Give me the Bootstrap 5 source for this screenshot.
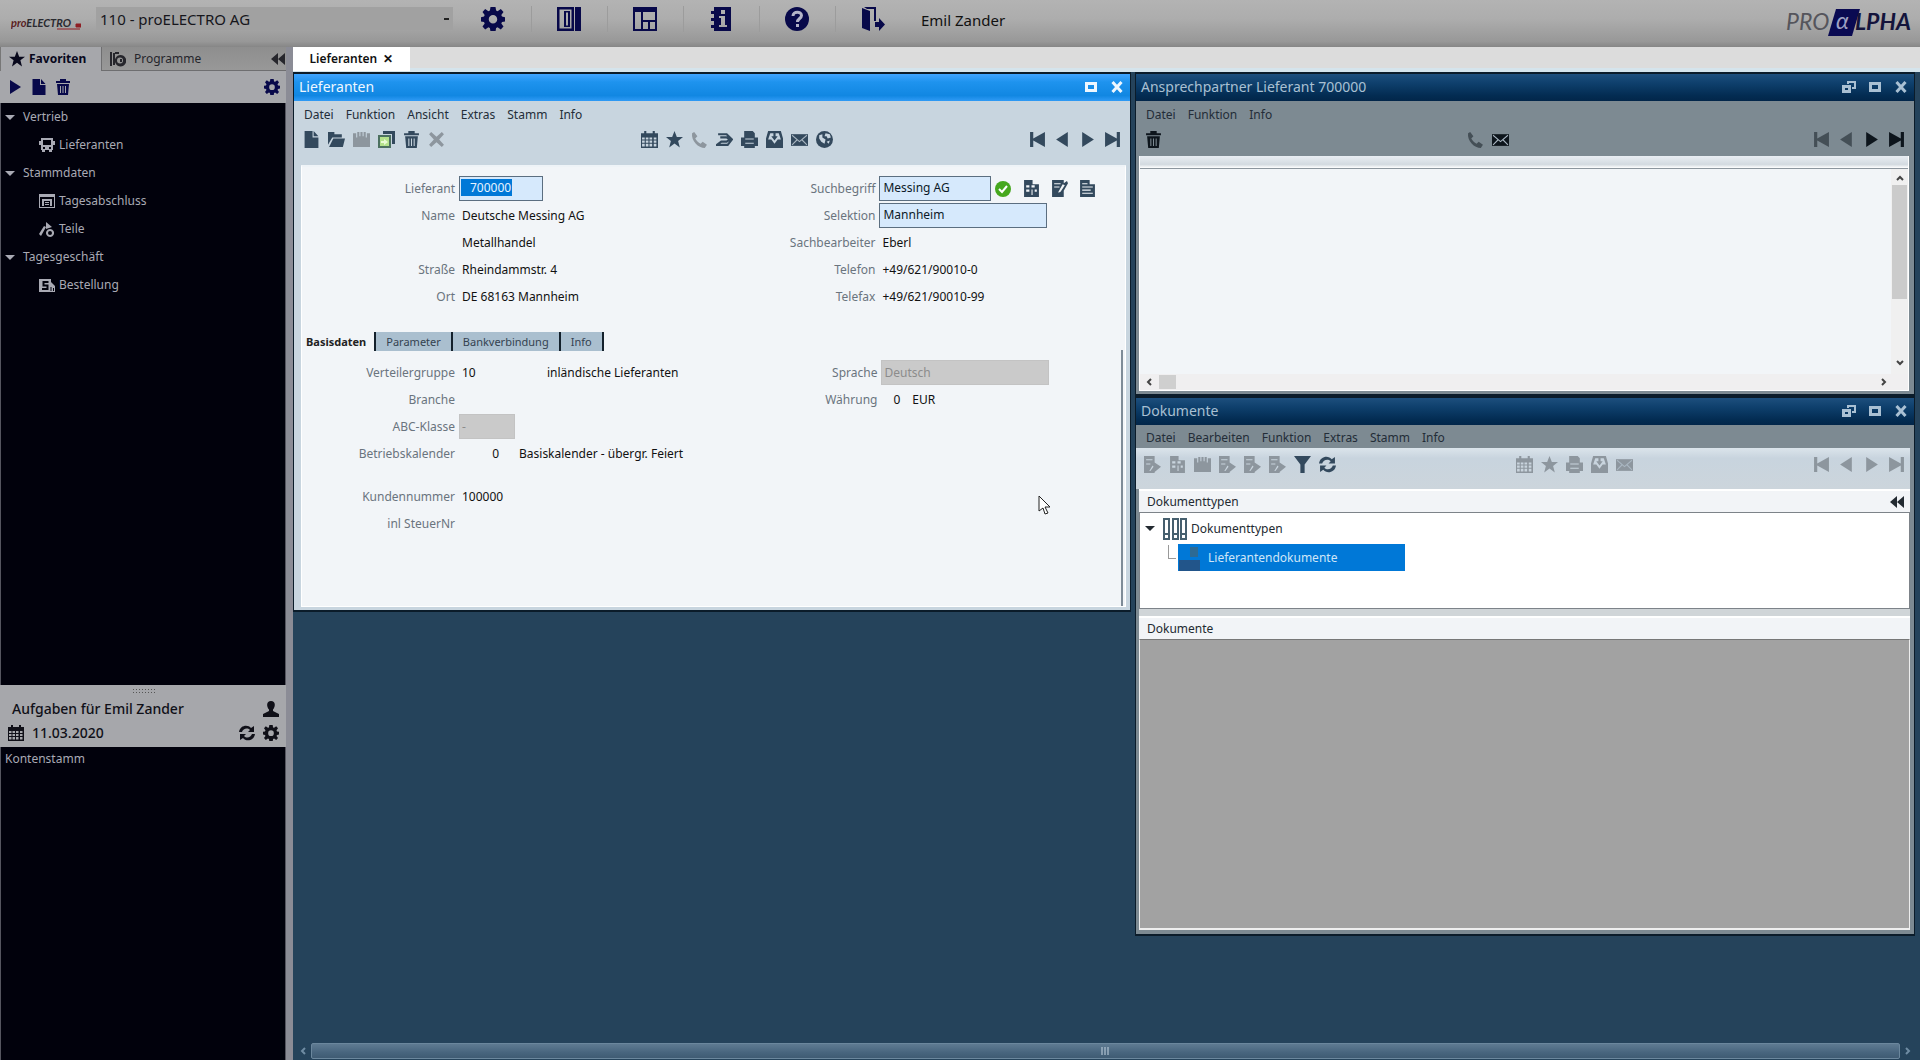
<!DOCTYPE html>
<html lang="de">
<head>
<meta charset="utf-8">
<meta name="viewport" content="width=device-width, initial-scale=1">
<title>Lieferanten</title>
<link href="https://cdn.jsdelivr.net/npm/bootstrap@5.3.0/dist/css/bootstrap.min.css" rel="stylesheet">
<style>
:root{--navy:#08094a;--ink:#33495d;--off:#8d969e;--desk:#25435b}
body{font-family:"Noto Sans","Open Sans",sans-serif;font-size:12px;line-height:16px;color:#111;background:var(--desk)}
button{border:0;background:none;padding:0;color:inherit;line-height:inherit}
a{color:inherit;text-decoration:none}
.ic{width:16px;height:16px;fill:currentColor;display:block;flex:none}
.ic-lg{width:24px;height:24px}
.topbar{height:47px;background:linear-gradient(#b3b3b3,#adadad 40%,#989898 88%,#868686);color:var(--navy);padding:0 8px 0 11px}
.topbar .logo-e{width:70px;height:14px;margin-right:15px}
.client{width:357px;height:23px;margin-bottom:10px;background-color:#a1a1a1;border:0;border-radius:0;padding:0 24px 0 4px;font-size:15px;line-height:22px;color:#16161c;appearance:none;background-repeat:no-repeat;background-image:linear-gradient(#222,#222);background-size:5px 2px;background-position:right 4px center}
.toolstrip{margin:0 0 9px 3px}
.toolstrip button{padding:0 26px 0 25px;height:26px;border-right:1px solid #9c9c9c}
.toolstrip button:last-child{border:0}
.username{font-size:15px;color:#111;margin:0 0 8px 10px}
.side{width:293px;flex:none;background:#a6a7ab;border-right:7px solid #8b8c96;color:var(--navy)}
.side-tabs{height:24px}
.side-tabs .on{width:101px;font-weight:700;background:#a6a7ab;color:#08081c;border-left:1px solid #777}
.side-tabs .other{flex:1;background:linear-gradient(#8e8e8e,#989898);border:1px solid #6e6e70;border-top:0;border-right:0;color:#26262c;padding:0 0 0 8px}
.side-tools{height:32px;padding:0 6px 0 7px}
.darklist{background:#01010c;color:#a9aab4;border-left:1px solid #55555f;border-right:1px solid #55555f}
.tree-nav{height:582px;padding-top:0}
.tree-nav .line{height:28px;padding-left:4px}
.tree-nav .sub{padding-left:38px}
.tri{width:0;height:0;border:5px solid transparent;border-top:5px solid currentColor;border-bottom:0}
.tasks{height:62px;padding:3px 7px 2px 8px;font-size:14px;font-weight:500;color:#101018}
.grip{width:24px;height:5px;margin:0 auto;background:radial-gradient(#555 1px,transparent 1px) 0 0/3px 3px}
.desk-tabs{height:25px;background:#dcdcdc;border-bottom:4px solid #d5e4ec}
.desk-tabs button{width:117px;height:24px;background:#fff;font-weight:600;color:#111}
.mdi{display:grid;grid-template-columns:minmax(0,838fr) minmax(0,780fr);gap:4px;padding-right:5px;align-items:start}
.win{border:1px solid #0b1c2a;border-width:2px 1px;background:#c8d5df;color:#232d38}
.win-dim{background:#7d8a92}
.titlebar{height:27px;padding:0 5px 2px 5px;font-size:14px;color:#eef7ff;background:linear-gradient(#3fa4ff,#1e93ee 30%,#1187e2 80%,#2f9af5)}
.win-dim .titlebar{color:#a9c0d3;background:linear-gradient(#1d4f7d,#0e3f6c 35%,#032c52 80%,#02264a)}
.winbtns{gap:10px}
.winbtns .ic{width:16px;height:14px}
.menubar{height:24px;gap:12px;padding:4px 0 0 10px}
.iconrow{padding:6px 9px 0;color:var(--ink)}
.iconrow .ic{width:17px;height:17px}
.iconrow>div{gap:8px}
.iconrow>.lead-icons{flex:1}
.main-tools{height:40px}
.main-tools .mid-icons{margin-left:50px}
.contact-tools{height:27px;color:#0d151c}
.contact-tools .mid-icons{margin-right:74px}
.doc-tools .mid-icons{margin-left:100px}
.iconrow .is-live{color:var(--ink)}
.iconrow .ic.is-off,.is-off{color:var(--off)}
.field-icons{padding:0 0 0 12px}
.field-icons .ic{margin-right:11px}
.pane{background:#f2f5f8;color:#111;border:1px solid #fff;border-top:2px solid #eef3f7}
.main-pane{margin:0 4px 3px 7px;padding:8px 0 0}
.halves{display:grid;grid-template-columns:422fr 404fr}
.frow{display:flex;align-items:center;min-height:27px}
.frow>label,.frow>.cap{width:153px;text-align:right;color:#6a747e;flex:none}
.val{padding-left:7px}
.frow input{height:25px;border:1px solid #5b6e80;background:#d6e9fc;margin-left:4px;padding:0 3px 2px;color:#0c1a28}
.frow select{height:25px;border:1px solid #c3c3c3;background:#cacaca;color:#8c8c8c;margin-left:4px;padding:0 2px;appearance:none;opacity:1}
.w-s{width:84px}.w-m{width:112px}.w-l{width:168px}.w-xs{width:56px}
.num-cell{width:44px}
.numfield{position:relative}
.seltext{position:absolute;left:6px;top:3px;background:#0078d7;color:#e8f4ff;padding:0 1px 0 9px;line-height:17px;pointer-events:none}
.formtabs{margin:22px 0 9px 0;height:19px;font-size:11px}
.formtabs button{border-right:2px solid #14212c;background:#aabfcf;color:#34424f;padding:0 10px;line-height:18px;height:19px}
.formtabs .on{background:none;color:#222;font-weight:700;padding:0 8px 0 4px}
.basis{grid-template-columns:424fr 398fr;border-right:2px solid #7e8b97;margin:-10px 2px 0 0;padding-top:9px;height:256px}
.contact-pane{margin:4px 5px 3px 3px;border-top:0}
.contact-head{height:13px;background:linear-gradient(#e9eef3,#d3dae0 70%,#fff);border-bottom:1px solid #8d969e}
.contact-list{height:205px}
.vbar{width:17px;background:#f0f0f0;color:#444;padding:5px 0 7px}
.vbar i{width:15px;height:114px;background:#cbcbcb;margin:3px 0 0 0}
.hbar{height:16px;background:#f0eff0;color:#444;padding:0 20px 1px 5px}
.hbar i{width:17px;height:14px;background:#cfcfcf;margin-left:6px}
.sb{width:8px;height:8px;fill:none;stroke:currentColor;stroke-width:2}
.doc-menu{height:23px;padding-top:3px}
.doc-tools{height:41px;background:linear-gradient(#dbe4eb,#c8d4de 25%,#ccd5dc);padding:0 5px 9px 8px;margin:0 4px 0 0}
.dochead{height:23px;background:#f2f4f7;border-top:2px solid #fff;padding:0 5px 0 8px;color:#232a31}
.docbody{margin:0 4px 4px 3px}
.doctree{height:97px;border:1px solid #7d8389;background:#fff;color:#232a31}
.doctree .l1{height:31px;padding-left:5px}
.branch{width:8px;height:14px;border:solid #999;border-width:0 0 1px 1px;margin:0 2px 12px 28px}
.picked{width:227px;height:27px;background:#0078d7;color:#cfe6f8}
.docgap{height:7px;background:#d0d5d8}
.docarea{height:291px;background:#a2a2a2;border:1px solid #eee;border-width:0 1px 2px;border-top:1px solid #777}
.deskbar{height:17px;gap:4px;padding:0 8px 1px 6px;color:#6f8ca3}
.deskbar>.thumb{flex:1;height:16px;background:linear-gradient(#5f7b92,#48657e 60%,#3f5b73);border:1px solid #6b879d;border-radius:2px;color:#c5d5e2}
.pointer{position:absolute;left:1038px;top:495px;width:14px;height:21px}
</style>
</head>
<body class="d-flex flex-column min-vh-100">
<svg width="0" height="0" class="position-absolute" aria-hidden="true">
<symbol id="gear" viewBox="0 0 24 24"><path fill-rule="evenodd" d="M9.500 0h5l.6 3.600 1.500.7L19.800 2 22.500 5l-2.200 3 .7 1.600 3 .6v4.200l-3 .6-.7 1.600 2.200 3-2.700 3-3.200-2.300-1.500.7-.6 3.600h-5l-.6-3.600-1.500-.7L4.200 22.600l-2.700-3 2.200-3-.7-1.600-3-.6v-4.200l3-.6.7-1.600-2.200-3 2.700-3 3.200 2.300 1.500-.7zM12 8a4.200 4.200 0 1 0 0 8.500A4.200 4.200 0 0 0 12 8z"/></symbol>
<symbol id="panel" viewBox="0 0 24 24"><path fill-rule="evenodd" d="M0 0h17v24H0zM2.500 2.500v19h12v-19zM7 4h6v16H7zM9 5.500v13h2v-13zM18 0h6v24h-6z"/></symbol>
<symbol id="layout" viewBox="0 0 24 24"><path fill-rule="evenodd" d="M0 0h24v24H0zM2 5v17h6V5zM10 5v8h12V5zM10 15v7h5v-7zM17 15v7h5v-7z"/></symbol>
<symbol id="infobook" viewBox="0 0 24 24"><path fill-rule="evenodd" d="M5 0h17v24H5v-3H2v-3h3v-4H2v-3h3V7H2V4h3zM12 3v4h4V3zM10 9v2h2v7h-2v2h8v-2h-2V9z"/></symbol>
<symbol id="help" viewBox="0 0 24 24"><circle cx="12" cy="12" r="12"/><path d="M8 9c0-5 8.500-5 8.500-.5 0 3-4 3-4 6.500M12.500 17v3" fill="none" stroke="#b4b4c8" stroke-width="3"/></symbol>
<symbol id="exit" viewBox="0 0 24 24"><path fill-rule="evenodd" d="M1 1l8 3v20l-8-3zM3 0h12v14h-2V2H6zM14 15h4v-4l6 6.500-6 6.500v-4h-4z"/></symbol>
<symbol id="star" viewBox="0 0 16 16"><path d="M8 0l2.200 5.700H16l-4.600 3.600L13 15.500 8 11.800l-5 3.700 1.600-6.200L0 5.700h5.800z"/></symbol>
<symbol id="radar" viewBox="0 0 16 16"><path d="M0 1h2v14H0zM3 2h2v12H3z"/><path fill-rule="evenodd" d="M10.500 4a5.700 5.700 0 1 0 .1 0zM10 6.500a3 3 0 1 1 0 6 3 3 0 0 1 0-6zM10 8v3h2V8z"/><path d="M5 1h4v2H5z"/></symbol>
<symbol id="rew" viewBox="0 0 16 16"><path d="M8 2v12L1 8zM15 2v12L8 8z"/></symbol>
<symbol id="play" viewBox="0 0 16 16"><path d="M3 1l11 7-11 7z"/></symbol>
<symbol id="back" viewBox="0 0 16 16"><path d="M13 1L2 8l11 7z"/></symbol>
<symbol id="first" viewBox="0 0 16 16"><path d="M1 1h3v6l11-6v14L4 9v6H1z"/></symbol>
<symbol id="last" viewBox="0 0 16 16"><path d="M12 1h3v14h-3V9L1 15V1l11 6z"/></symbol>
<symbol id="page" viewBox="0 0 16 16"><path d="M1.500 0H9v6h5.500v10h-13zM10 0l4.500 5H10z"/></symbol>
<symbol id="trash" viewBox="0 0 16 16"><path fill-rule="evenodd" d="M1 2h4V0h6v2h4v2H1zM2 5h12l-1 11H3zM5 7v7h1V7zM7.500 7v7h1V7zM10 7v7h1V7z"/></symbol>
<symbol id="bus" viewBox="0 0 16 16"><path fill-rule="evenodd" d="M2 1h12v3h2v4h-2v5h-1v2h-3v-2H6v2H3v-2H2V8H0V4h2zM4 3v5h8V3zM4 10v2h2v-2zM10 10v2h2v-2z"/></symbol>
<symbol id="screen" viewBox="0 0 16 16"><path fill-rule="evenodd" d="M0 1h16v14H0zM1 4v10h14V4zM3 6h10v7h-2V8H5v5H3zM6 9h4v1H6zM6 11h4v1H6z"/></symbol>
<symbol id="parts" viewBox="0 0 16 16"><path d="M0 13l5-8 2 1-5 9zM7 1l6 5-6 2z"/><path fill-rule="evenodd" d="M11 8a4 4 0 1 0 .1 0zM11 10a2 2 0 1 1 0 4 2 2 0 0 1 0-4z"/></symbol>
<symbol id="order" viewBox="0 0 16 16"><path d="M0 2h12v3l4 4v6H0z"/><path d="M9.500 5H4.500v3.500h4V12H3" fill="none" stroke="#01010c" stroke-width="2"/><path d="M12 10v4M14.500 11v3" stroke="#01010c"/></symbol>
<symbol id="user" viewBox="0 0 16 16"><path d="M8 0c5 0 4.500 6 2 8.500v1.500l6 3v3H0v-3l6-3V8.500C3.500 6 3 0 8 0z"/></symbol>
<symbol id="cal" viewBox="0 0 16 16"><path fill-rule="evenodd" d="M3 0h2v2h6V0h2v2h3v14H0V2h3zM1 6v2h2.500V6zM4.500 6v2H7V6zM8 6v2h2.500V6zM12 6v2h2.500V6zM1 9v2h2.500V9zM4.500 9v2H7V9zM8 9v2h2.500V9zM12 9v2h2.500V9zM1 12v2.500h2.500V12zM4.500 12v2.500H7V12zM8 12v2.500h2.500V12zM12 12v2.500h2.500V12z"/></symbol>
<symbol id="sync" viewBox="0 0 16 16"><path d="M0 7c1-7 9-8 12-4l3-2v6H9l2-2C8 2 4 4 3 7zM16 9c-1 7-9 8-12 4l-3 2V9h6l-2 2c3 3 7 1 8-2z"/></symbol>
<symbol id="folder" viewBox="0 0 16 16"><path d="M0 1h6v2h7v3H4l-4 7zM5 7h11l-2 8H1z"/></symbol>
<symbol id="save" viewBox="0 0 16 16"><path d="M0 2h3v4h1V1h2v4h1V1h2v4h1V1h2v5h1V2h3v13H0z"/></symbol>
<symbol id="copy" viewBox="0 0 17 17"><path fill="#33495d" d="M5 0h12v13h-3V3H5z"/><path fill="#4c7160" d="M0 4h13v13H0z"/><path fill="#b4e28c" d="M2 6h9v9H2z"/><path fill="#e9fbd4" d="M3 10h3V8l4 3-4 3v-2H3z"/></symbol>
<symbol id="cross" viewBox="0 0 16 16"><path d="M1 3l2-2 5 4.500L13 1l2 2-4.500 5 4.500 5-2 2-5-4.500L3 15l-2-2 4.500-5z"/></symbol>
<symbol id="phone" viewBox="0 0 16 16"><path d="M3 1l3 4-2 2c1 2 3 4 5 5l2-2 4 3-2 3C7 16 0 9 1 2z"/></symbol>
<symbol id="flow" viewBox="0 0 16 16"><path fill="none" stroke="currentColor" stroke-width="2" d="M2 3h8l5 5-4 5H1l4-3h5l3-2-3-2H4"/></symbol>
<symbol id="print" viewBox="0 0 16 16"><path fill-rule="evenodd" d="M3 0h8l2 2v4h3v8h-3v2H3v-2H0V6h3zM4 7v1h8V7zM4 11v1h8v-1z"/></symbol>
<symbol id="inbox" viewBox="0 0 16 16"><path fill-rule="evenodd" d="M2 0h12l2 7v9H0V7zM4 2L2 8h3l3 4 3-4h3l-2-6h-3v3h2L8 9 5 5h2V2z"/></symbol>
<symbol id="mail" viewBox="0 0 16 16"><path d="M0 3h16v11H0z"/><path fill="none" stroke="#aab7c2" d="M1 4l7 6 7-6M1 13l5-5M15 13l-5-5"/></symbol>
<symbol id="globe" viewBox="0 0 16 16"><circle cx="8" cy="8" r="8"/><path fill="#c8d5df" d="M9 2l4 1 1 3-3 1-1-2H8zM3 4l3-1v3l3 2-1 4-3-2-2-3zM10 10l3-1-1 3z"/></symbol>
<symbol id="pgcols" viewBox="0 0 16 16"><path fill-rule="evenodd" d="M1 0h8v4h6v12H1zM3 5v2h3V5zM8 5v2h3V5zM3 9v2h3V9zM8 9v5h1V9zM11 9v2h2V9z"/></symbol>
<symbol id="pgedit" viewBox="0 0 16 16"><path fill-rule="evenodd" d="M1 0h11v3l3-2 1 2-4 7v6H1zM3 3v1h6V3zM3 6v1h5V6zM11 4L7 11v1l2-1 4-6z"/></symbol>
<symbol id="pglist" viewBox="0 0 16 16"><path fill-rule="evenodd" d="M1 0h9v4h5v12H1zM3 3v1h5V3zM3 6v1h10V6zM3 9v1h8V9zM3 12v1h10v-1z"/></symbol>
<symbol id="pgarrow" viewBox="0 0 16 16"><path fill-rule="evenodd" d="M0 0h10v6l6 4-6 5v1H0zM2 3v1h6V3zM2 7v1h4V7zM8 9l-3 5h1l3-4z"/></symbol>
<symbol id="funnel" viewBox="0 0 16 16"><path d="M0 0h16L10 8v8H6V8z"/></symbol>
<symbol id="binders" viewBox="0 0 24 22"><path fill="none" stroke="#465f6e" stroke-width="2" d="M1 1h5v20H1zM10 1h5v20h-5zM18 1h5v20h-5zM1 16h5M10 16h5M18 16h5"/></symbol>
<symbol id="max" viewBox="0 0 16 14"><path fill="none" stroke="currentColor" stroke-width="3" d="M3.500 3.500h9v7h-9z"/></symbol>
<symbol id="rest" viewBox="0 0 16 14"><path fill="none" stroke="currentColor" stroke-width="3" d="M2.500 6.500h6v5h-6z"/><path fill="none" stroke="currentColor" stroke-width="2" d="M7 4V2h7v6h-3"/></symbol>
<symbol id="close" viewBox="0 0 16 14"><path fill="none" stroke="currentColor" stroke-width="3" d="M3.500 2l9 10M12.500 2l-9 10"/></symbol>
</svg>

<header class="topbar d-flex align-items-center">
  <svg class="logo-e flex-shrink-0" viewBox="0 0 70 14" role="img" aria-label="proELECTRO"><text x="0" y="10" font-size="11" font-weight="700" font-style="italic" font-family="Lato" fill="#5a1d22">pro<tspan fill="#2a2a30">ELECTRO</tspan></text><path d="M46 12h23M65 7h5v3h-5z" stroke="#8f1f25" fill="#8f1f25"/></svg>
  <select class="client" aria-label="Mandant"><option>110 - proELECTRO AG</option></select>
  <nav class="toolstrip d-flex">
    <button aria-label="Einstellungen"><svg class="ic ic-lg"><use href="#gear"/></svg></button>
    <button aria-label="Leiste"><svg class="ic ic-lg"><use href="#panel"/></svg></button>
    <button aria-label="Layout"><svg class="ic ic-lg"><use href="#layout"/></svg></button>
    <button aria-label="Info"><svg class="ic ic-lg"><use href="#infobook"/></svg></button>
    <button aria-label="Hilfe"><svg class="ic ic-lg"><use href="#help"/></svg></button>
    <button aria-label="Abmelden"><svg class="ic ic-lg"><use href="#exit"/></svg></button>
  </nav>
  <span class="username">Emil Zander</span>
  <svg class="ms-auto mb-1" width="126" height="30" viewBox="0 0 126 30" role="img" aria-label="PROALPHA"><path d="M50 2h24l-8 27H42z" fill="#0a0a52"/><g font-family="Lato" font-style="italic" font-size="23"><text x="0" y="23" fill="#55555c">PRO</text><text x="50" y="22" fill="#9fa2c4">α</text><text x="69" y="23" font-weight="700" fill="#14143c">LPHA</text></g></svg>
</header>

<div class="d-flex flex-grow-1">
  <aside class="side d-flex flex-column">
    <div class="side-tabs d-flex">
      <button class="on d-flex align-items-center ps-2"><svg class="ic me-1"><use href="#star"/></svg>Favoriten</button>
      <div class="other d-flex align-items-center">
        <button class="d-flex align-items-center"><svg class="ic me-2"><use href="#radar"/></svg>Programme</button>
        <button class="ms-auto" aria-label="Einklappen"><svg class="ic"><use href="#rew"/></svg></button>
      </div>
    </div>
    <div class="side-tools d-flex align-items-center">
      <button aria-label="Start"><svg class="ic me-2"><use href="#play"/></svg></button>
      <button aria-label="Neu"><svg class="ic me-2"><use href="#page"/></svg></button>
      <button aria-label="Löschen"><svg class="ic"><use href="#trash"/></svg></button>
      <button class="ms-auto" aria-label="Optionen"><svg class="ic"><use href="#gear"/></svg></button>
    </div>
    <nav class="darklist tree-nav">
      <a href="#" class="line d-flex align-items-center"><span class="tri me-2"></span>Vertrieb</a>
      <a href="#" class="line sub d-flex align-items-center"><svg class="ic me-1"><use href="#bus"/></svg>Lieferanten</a>
      <a href="#" class="line d-flex align-items-center"><span class="tri me-2"></span>Stammdaten</a>
      <a href="#" class="line sub d-flex align-items-center"><svg class="ic me-1"><use href="#screen"/></svg>Tagesabschluss</a>
      <a href="#" class="line sub d-flex align-items-center"><svg class="ic me-1"><use href="#parts"/></svg>Teile</a>
      <a href="#" class="line d-flex align-items-center"><span class="tri me-2"></span>Tagesgeschäft</a>
      <a href="#" class="line sub d-flex align-items-center"><svg class="ic me-1"><use href="#order"/></svg>Bestellung</a>
    </nav>
    <section class="tasks">
      <div class="grip"></div>
      <div class="d-flex align-items-center justify-content-between ps-1 pt-2"><span>Aufgaben für Emil Zander</span><svg class="ic"><use href="#user"/></svg></div>
      <div class="d-flex align-items-center pt-2 gap-2"><svg class="ic"><use href="#cal"/></svg><span>11.03.2020</span><button class="ms-auto" aria-label="Aktualisieren"><svg class="ic"><use href="#sync"/></svg></button><button aria-label="Optionen"><svg class="ic"><use href="#gear"/></svg></button></div>
    </section>
    <div class="darklist flex-grow-1 px-1 pt-1">Kontenstamm</div>
  </aside>

  <main class="flex-grow-1 d-flex flex-column">
    <div class="desk-tabs"><button>Lieferanten &nbsp;✕</button></div>
    <div class="mdi flex-grow-1">
      <section class="win">
        <div class="titlebar d-flex align-items-center justify-content-between"><span>Lieferanten</span>
          <div class="winbtns d-flex"><button aria-label="Maximieren"><svg class="ic"><use href="#max"/></svg></button><button aria-label="Schließen"><svg class="ic"><use href="#close"/></svg></button></div></div>
        <nav class="menubar d-flex align-items-center"><a href="#">Datei</a><a href="#">Funktion</a><a href="#">Ansicht</a><a href="#">Extras</a><a href="#">Stamm</a><a href="#">Info</a></nav>
        <div class="iconrow main-tools d-flex">
          <div class="lead-icons d-flex">
            <svg class="ic"><use href="#page"/></svg><svg class="ic"><use href="#folder"/></svg><svg class="ic is-off"><use href="#save"/></svg><svg class="ic"><use href="#copy"/></svg><svg class="ic"><use href="#trash"/></svg><svg class="ic is-off"><use href="#cross"/></svg>
          </div>
          <div class="mid-icons d-flex">
            <svg class="ic"><use href="#cal"/></svg><svg class="ic"><use href="#star"/></svg><svg class="ic is-off"><use href="#phone"/></svg><svg class="ic"><use href="#flow"/></svg><svg class="ic"><use href="#print"/></svg><svg class="ic"><use href="#inbox"/></svg><svg class="ic"><use href="#mail"/></svg><svg class="ic"><use href="#globe"/></svg>
          </div>
          <div class="lead-icons d-flex justify-content-end">
            <svg class="ic"><use href="#first"/></svg><svg class="ic"><use href="#back"/></svg><svg class="ic"><use href="#play"/></svg><svg class="ic"><use href="#last"/></svg>
          </div>
        </div>
        <form class="pane main-pane">
          <div class="halves">
            <div>
              <div class="frow"><label for="lief">Lieferant</label><div class="numfield"><input id="lief" class="w-s" value=""><span class="seltext">700000</span></div></div>
              <div class="frow"><span class="cap">Name</span><span class="val">Deutsche Messing AG</span></div>
              <div class="frow"><span class="cap"></span><span class="val">Metallhandel</span></div>
              <div class="frow"><span class="cap">Straße</span><span class="val">Rheindammstr. 4</span></div>
              <div class="frow"><span class="cap">Ort</span><span class="val">DE 68163 Mannheim</span></div>
            </div>
            <div>
              <div class="frow"><label for="such">Suchbegriff</label><input id="such" class="w-m" value="Messing AG">
                <svg class="ic ms-1" viewBox="0 0 16 16"><circle cx="8" cy="8" r="8" fill="#46a81e"/><path d="M4 8l3 3 5-6" fill="none" stroke="#fff" stroke-width="2"/></svg>
                <div class="d-flex iconrow field-icons"><svg class="ic"><use href="#pgcols"/></svg><svg class="ic"><use href="#pgedit"/></svg><svg class="ic"><use href="#pglist"/></svg></div></div>
              <div class="frow"><label for="sel">Selektion</label><input id="sel" class="w-l" value="Mannheim"></div>
              <div class="frow"><span class="cap">Sachbearbeiter</span><span class="val">Eberl</span></div>
              <div class="frow"><span class="cap">Telefon</span><span class="val">+49/621/90010-0</span></div>
              <div class="frow"><span class="cap">Telefax</span><span class="val">+49/621/90010-99</span></div>
            </div>
          </div>
          <div class="formtabs d-flex"><button type="button" class="on">Basisdaten</button><button type="button">Parameter</button><button type="button">Bankverbindung</button><button type="button">Info</button></div>
          <div class="basis halves">
            <div>
              <div class="frow"><span class="cap">Verteilergruppe</span><span class="val w-s">10</span><span class="ps-2">inländische Lieferanten</span></div>
              <div class="frow"><span class="cap">Branche</span></div>
              <div class="frow"><label for="abc">ABC-Klasse</label><select id="abc" class="w-xs" disabled><option>-</option></select></div>
              <div class="frow"><span class="cap">Betriebskalender</span><span class="num-cell text-end">0</span><span class="ps-3 ms-1">Basiskalender - übergr. Feiert</span></div>
              <div class="frow mt-3"><span class="cap">Kundennummer</span><span class="val">100000</span></div>
              <div class="frow"><span class="cap">inl SteuerNr</span></div>
            </div>
            <div>
              <div class="frow"><label for="spr">Sprache</label><select id="spr" class="w-l" disabled><option>Deutsch</option></select></div>
              <div class="frow"><span class="cap">Währung</span><span class="ps-3">0</span><span class="ps-2 ms-1">EUR</span></div>
            </div>
          </div>
        </form>
      </section>

      <div class="d-grid">
        <section class="win win-dim">
          <div class="titlebar d-flex align-items-center justify-content-between"><span>Ansprechpartner Lieferant 700000</span>
            <div class="winbtns d-flex"><button aria-label="Wiederherstellen"><svg class="ic"><use href="#rest"/></svg></button><button aria-label="Maximieren"><svg class="ic"><use href="#max"/></svg></button><button aria-label="Schließen"><svg class="ic"><use href="#close"/></svg></button></div></div>
          <nav class="menubar d-flex align-items-center"><a href="#">Datei</a><a href="#">Funktion</a><a href="#">Info</a></nav>
          <div class="iconrow contact-tools d-flex">
            <div class="lead-icons d-flex"><svg class="ic"><use href="#trash"/></svg></div>
            <div class="mid-icons d-flex"><svg class="ic opacity-50"><use href="#phone"/></svg><svg class="ic"><use href="#mail"/></svg></div>
            <div class="lead-icons d-flex justify-content-end"><svg class="ic opacity-50"><use href="#first"/></svg><svg class="ic opacity-50"><use href="#back"/></svg><svg class="ic"><use href="#play"/></svg><svg class="ic"><use href="#last"/></svg></div>
          </div>
          <div class="pane contact-pane">
            <div class="contact-head"></div>
            <div class="contact-list d-flex"><div class="flex-grow-1"></div>
              <div class="vbar d-flex flex-column align-items-center"><svg class="sb"><path d="M1 6l3-3 3 3"/></svg><i></i><svg class="sb mt-auto"><path d="M1 2l3 3 3-3"/></svg></div></div>
            <div class="hbar d-flex align-items-center"><svg class="sb"><path d="M6 1L3 4l3 3"/></svg><i></i><svg class="sb ms-auto"><path d="M2 1l3 3-3 3"/></svg></div>
          </div>
        </section>

        <section class="win win-dim">
          <div class="titlebar d-flex align-items-center justify-content-between"><span>Dokumente</span>
            <div class="winbtns d-flex"><button aria-label="Wiederherstellen"><svg class="ic"><use href="#rest"/></svg></button><button aria-label="Maximieren"><svg class="ic"><use href="#max"/></svg></button><button aria-label="Schließen"><svg class="ic"><use href="#close"/></svg></button></div></div>
          <nav class="menubar doc-menu d-flex align-items-center"><a href="#">Datei</a><a href="#">Bearbeiten</a><a href="#">Funktion</a><a href="#">Extras</a><a href="#">Stamm</a><a href="#">Info</a></nav>
          <div class="iconrow doc-tools d-flex align-items-center is-off">
            <div class="lead-icons d-flex"><svg class="ic"><use href="#pgarrow"/></svg><svg class="ic"><use href="#pgcols"/></svg><svg class="ic"><use href="#save"/></svg><svg class="ic"><use href="#pgarrow"/></svg><svg class="ic"><use href="#pgarrow"/></svg><svg class="ic"><use href="#pgarrow"/></svg><svg class="ic is-live"><use href="#funnel"/></svg><svg class="ic is-live"><use href="#sync"/></svg></div>
            <div class="mid-icons d-flex"><svg class="ic"><use href="#cal"/></svg><svg class="ic"><use href="#star"/></svg><svg class="ic"><use href="#print"/></svg><svg class="ic"><use href="#inbox"/></svg><svg class="ic"><use href="#mail"/></svg></div>
            <div class="lead-icons d-flex justify-content-end"><svg class="ic"><use href="#first"/></svg><svg class="ic"><use href="#back"/></svg><svg class="ic"><use href="#play"/></svg><svg class="ic"><use href="#last"/></svg></div>
          </div>
          <div class="docbody">
            <div class="dochead d-flex align-items-center justify-content-between"><span>Dokumenttypen</span><svg class="ic"><use href="#rew"/></svg></div>
            <div class="doctree">
              <div class="l1 d-flex align-items-center"><span class="tri me-2"></span><svg width="24" height="22" class="me-1"><use href="#binders"/></svg>Dokumenttypen</div>
              <div class="d-flex align-items-center"><span class="branch"></span><div class="picked d-flex align-items-center"><svg width="22" height="27" class="me-2"><path d="M1 16h21v11H1z" fill="#22558a"/><path d="M12 3h8v10h-8z" fill="#2c6a94"/></svg>Lieferantendokumente</div></div>
            </div>
            <div class="docgap"></div>
            <div class="dochead d-flex align-items-center">Dokumente</div>
            <div class="docarea"></div>
          </div>
        </section>
      </div>
    </div>
    <div class="deskbar d-flex align-items-center"><svg class="sb"><path d="M6 1L3 4l3 3"/></svg><div class="thumb d-flex align-items-center justify-content-center"><svg width="10" height="8"><path d="M1 0v8M4 0v8M7 0v8" stroke="currentColor"/></svg></div><svg class="sb"><path d="M2 1l3 3-3 3"/></svg></div>
  </main>
</div>
<svg class="pointer" viewBox="0 0 14 21" aria-hidden="true"><path d="M1 1v15l4-3 2 6 3-1-3-6h5z" fill="#fff" stroke="#222"/></svg>
<script src="https://cdn.jsdelivr.net/npm/bootstrap@5.3.0/dist/js/bootstrap.bundle.min.js"></script>
</body>
</html>
